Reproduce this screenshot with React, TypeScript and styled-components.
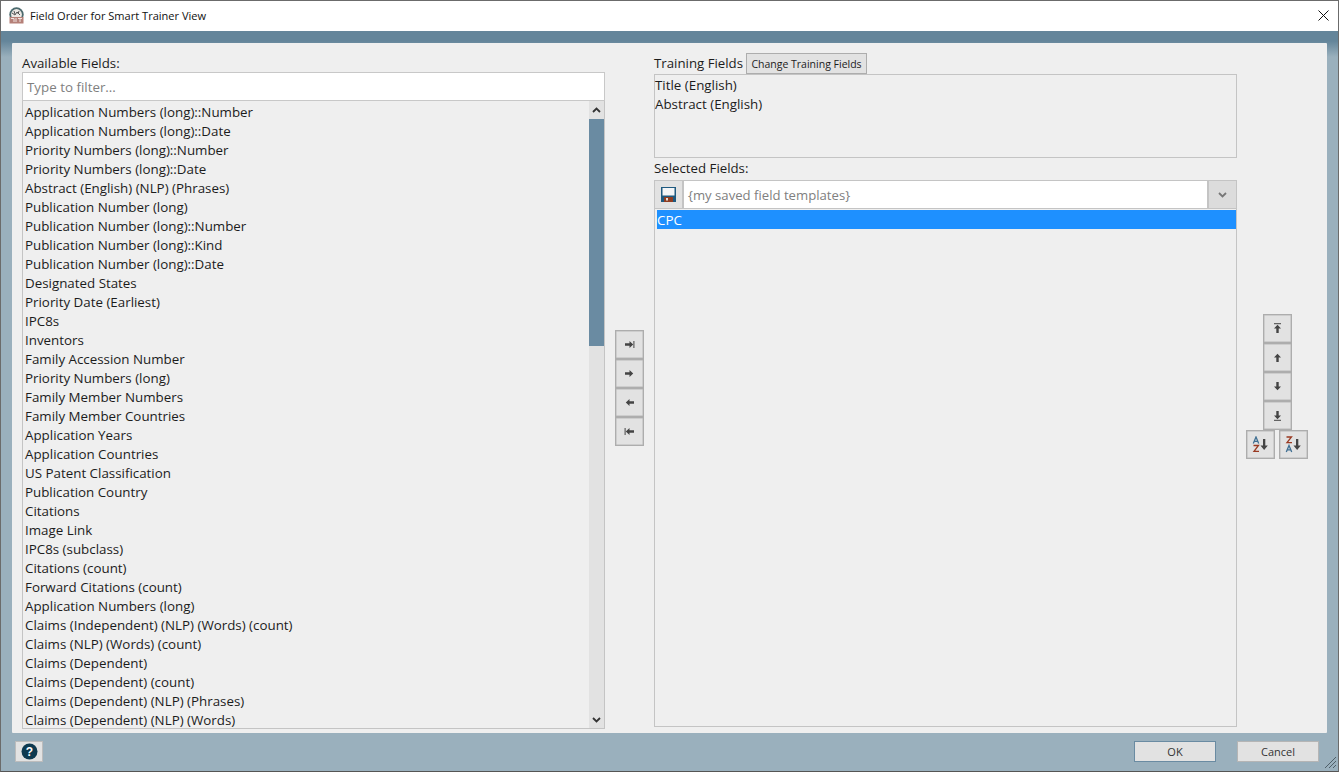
import React from "react";
import styled, { createGlobalStyle } from "styled-components";

const Global = createGlobalStyle`
  html, body { margin: 0; padding: 0; background: #9ab0bd; }
  * { box-sizing: border-box; }
  body { font-family: "Open Sans", "Liberation Sans", sans-serif; color: #1c1c1c; }
`;

const Win = styled.div`
  width: 1339px; height: 772px; display: flex; flex-direction: column; overflow: hidden;
  border: 1px solid #6b6b6b; border-bottom-color: #555; position: relative;
  background: #9ab0bd;
`;
const TitleBar = styled.div`
  height: 30px; flex: none; background: #fff; display: flex; align-items: center; padding: 0 0 2px 7px; gap: 4px;
  font-size: 11.05px; color: #111;
`;
const TitleText = styled.span`flex: 1; padding-left: 1px;`;
const CloseBox = styled.div`width: 30px; height: 28px; display: flex; align-items: center; justify-content: center;`;
const Body = styled.div`
  flex: 1; display: flex; flex-direction: column; padding: 12px 11px 0 11px;
  background: linear-gradient(#64859a 0, #64859a 10px, #9ab0bd 26px);
`;
const Panel = styled.div`
  height: 690px; flex: none; background: #efefef; padding: 10px 0 0 10px; display: flex; gap: 10px;
  border-radius: 1px;
`;
const Col = styled.div`width: 583px; flex: none; display: flex; flex-direction: column;`;
const Label = styled.div`font-size: 13.25px; height: 19px; line-height: 19px; white-space: nowrap;`;
const LeftLabel = styled(Label)`flex: none; line-height: 21px;`;
const TrainLabel = styled(Label)`width: 88px; flex: none;`;
const FilterInput = styled.div`
  height: 29px; flex: none; background: #fff; border: 1px solid #c8c8c8; padding-left: 4px;
  font-size: 13.35px; line-height: 29px; color: #7f7f7f;
`;
const ListBox = styled.div`height: 628px; flex: none; display: flex; border: 1px solid #c4c4c4; border-top: 0;`;
const ListBody = styled.div`flex: 1; padding: 2px 0 0 2px;`;
const Row = styled.div`height: 19px; line-height: 19px; font-size: 13.35px; white-space: nowrap;`;
const ScrollBar = styled.div`width: 15px; flex: none; background: #e2e2e2; display: flex; flex-direction: column;`;
const ScrollArrow = styled.div<{ $h: number }>`
  height: ${(p) => p.$h}px; flex: none; display: flex; align-items: center; justify-content: center; background: #e2e2e2;
`;
const ScrollThumb = styled.div`height: 227px; flex: none; background: #6a8ba2;`;
const ScrollTrack = styled.div`flex: 1;`;

const MidCol = styled.div`width: 29px; flex: none; padding-top: 277px; display: flex; flex-direction: column;`;
const IconBtn = styled.div`
  width: 29px; height: 29px; flex: none; background: #e2e2e2; border: 1px solid #adadad; display: flex; align-items: center; justify-content: center;
  box-shadow: inset 0 0 0 0.5px #b8b8b8;
`;
const TrainHead = styled.div`display: flex; height: 21px; flex: none; align-items: center; gap: 4px;`;
const ChangeBtn = styled.div`
  width: 121px; height: 21px; background: #e2e2e2; border: 1px solid #adadad; font-size: 10.5px; line-height: 20px; text-align: center; white-space: nowrap;
`;
const TrainBox = styled.div`height: 84px; flex: none; border: 1px solid #c4c4c4; padding: 1px 0 0 0;`;
const SelLabel = styled(Label)`margin-top: 1px; height: 21px; line-height: 19px;`;
const Combo = styled.div`height: 29px; flex: none; display: flex; border: 1px solid #c4c4c4;`;
const SaveBtn = styled.div`width: 29px; flex: none; background: #e2e2e2; border-right: 2px solid #c4c4c4; display: flex; align-items: center; justify-content: center;`;
const ComboText = styled.div`flex: 1; background: #fff; padding-left: 4px; font-size: 13.15px; line-height: 29px; color: #808080;`;
const ComboArrow = styled.div`width: 29px; flex: none; background: #dcdcdc; border-left: 2px solid #c4c4c4; display: flex; align-items: center; justify-content: center;`;
const SelList = styled.div`height: 518px; flex: none; border: 1px solid #c4c4c4; border-top: 0; padding: 1px 0 0 2px;`;
const SelRow = styled.div`height: 19px; line-height: 21px; font-size: 13.35px; background: #1e90ff; color: #fff;`;

const Rail = styled.div`width: 62px; margin-left: -1px; flex: none; padding-top: 261px; display: flex; flex-direction: column; align-items: center;`;
const SortRow = styled.div`display: flex; gap: 4px;`;

const Footer = styled.div`flex: 1; display: flex; align-items: flex-start; padding: 8px 8px 0 3px; position: relative;`;
const HelpBtn = styled.div`width: 28px; height: 21px; background: #e2e2e2; border: 1px solid #bcbcbc; display: flex; align-items: center; justify-content: center;`;
const Spacer = styled.div`flex: 1;`;
const DialogBtn = styled.div<{ $primary?: boolean }>`
  width: 82px; height: 21px; background: #e2e2e2; font-size: 11px; line-height: 19px; text-align: center;
  border: 1px solid ${(p) => (p.$primary ? "#6a8ba2" : "#b5b5b5")}; color: #333;
  margin-left: ${(p) => (p.$primary ? "0" : "21px")};
`;
const Grip = styled.svg`position: absolute; right: -10px; bottom: 2px;`;

const fields = [
  "Application Numbers (long)::Number","Application Numbers (long)::Date","Priority Numbers (long)::Number","Priority Numbers (long)::Date",
  "Abstract (English) (NLP) (Phrases)","Publication Number (long)","Publication Number (long)::Number","Publication Number (long)::Kind",
  "Publication Number (long)::Date","Designated States","Priority Date (Earliest)","IPC8s","Inventors","Family Accession Number",
  "Priority Numbers (long)","Family Member Numbers","Family Member Countries","Application Years","Application Countries",
  "US Patent Classification","Publication Country","Citations","Image Link","IPC8s (subclass)","Citations (count)","Forward Citations (count)",
  "Application Numbers (long)","Claims (Independent) (NLP) (Words) (count)","Claims (NLP) (Words) (count)","Claims (Dependent)",
  "Claims (Dependent) (count)","Claims (Dependent) (NLP) (Phrases)","Claims (Dependent) (NLP) (Words)",
];

const G = "#444";
const Glyph = ({ d }: { d: React.ReactNode }) => (
  <svg width="11" height="11" viewBox="0 0 11 11">{d}</svg>
);
const right = <path d="M1 4.300h4.500V2l3.700 3.500L5.500 9V6.700H1z" fill={G} />;
const left = <path d="M10 4.300H5.500V2L1.800 5.500 5.500 9V6.700H10z" fill={G} />;
const up = <path d="M4.300 10V5.500H2L5.500 1.800 9 5.500H6.700V10z" fill={G} />;
const down = <path d="M4.300 1v4.500H2L5.500 9.200 9 5.500H6.700V1z" fill={G} />;

const Chevron = ({ up: isUp, color = "#333" }: { up?: boolean; color?: string }) => (
  <svg width="9" height="6" viewBox="0 0 9 6">
    <path d={isUp ? "M1 5l3.500-3.500L8 5" : "M1 1l3.500 3.500L8 1"} fill="none" stroke={color} strokeWidth="1.800" />
  </svg>
);

const SortIcon = ({ rev }: { rev?: boolean }) => (
  <svg width="19" height="17" viewBox="0 0 19 17">
    <g fill="none" strokeWidth="1.300">
      <g stroke={rev ? "#9a3a22" : "#3f6f92"}>
        {rev ? <path d="M2.500 1h5L3 6.600h5" /> : <path d="M2.300 7.500L5 1l2.700 6.500M3.300 5.300h3.400" />}
      </g>
      <g stroke={rev ? "#3f6f92" : "#9a3a22"}>
        {rev ? <path d="M2.300 16L5 9.500l2.700 6.500M3.300 13.800h3.400" /> : <path d="M2.500 9.500h5L3 15.400h5" />}
      </g>
    </g>
    <path d="M12 3h2.300v6.500h2.500L13.150 14 9.500 9.500H12z" fill={G} />
  </svg>
);

const Logo = () => (
  <svg width="17" height="17" viewBox="0 0 17 17">
    <circle cx="8.500" cy="7.500" r="7.200" fill="#4c6a6e" />
    <circle cx="8.500" cy="7.500" r="5.400" fill="#ece8e4" />
    <path d="M4 6l3 2 2-3 3 3M6 4l1 3M11 4l-1 3" stroke="#555" strokeWidth="1" fill="none" />
    <rect x="1.500" y="10" width="14" height="6.500" fill="#b58078" />
    <path d="M3 11.500h3v3.500M8 11v4M10 11.500h4M12 11.500v3.500" stroke="#efe3e0" strokeWidth="1" fill="none" />
  </svg>
);

export default function App() {
  return (
    <Win>
      <Global />
      <TitleBar>
        <Logo />
        <TitleText>Field Order for Smart Trainer View</TitleText>
        <CloseBox>
          <svg width="11" height="11" viewBox="0 0 11 11"><path d="M.5.5l10 10M10.500.5l-10 10" stroke="#111" strokeWidth="1" /></svg>
        </CloseBox>
      </TitleBar>
      <Body>
        <Panel>
          <Col>
            <LeftLabel>Available Fields:</LeftLabel>
            <FilterInput>Type to filter...</FilterInput>
            <ListBox>
              <ListBody>{fields.map((f, i) => <Row key={i}>{f}</Row>)}</ListBody>
              <ScrollBar>
                <ScrollArrow $h={18}><Chevron up /></ScrollArrow>
                <ScrollThumb />
                <ScrollTrack />
                <ScrollArrow $h={17}><Chevron /></ScrollArrow>
              </ScrollBar>
            </ListBox>
          </Col>
          <MidCol>
            <IconBtn><Glyph d={<>{right}<rect x="9.400" y="2" width="1" height="7" fill={G} /></>} /></IconBtn>
            <IconBtn><Glyph d={right} /></IconBtn>
            <IconBtn><Glyph d={left} /></IconBtn>
            <IconBtn><Glyph d={<>{left}<rect x=".6" y="2" width="1" height="7" fill={G} /></>} /></IconBtn>
          </MidCol>
          <Col>
            <TrainHead>
              <TrainLabel>Training Fields</TrainLabel>
              <ChangeBtn>Change Training Fields</ChangeBtn>
            </TrainHead>
            <TrainBox>
              <Row>Title (English)</Row>
              <Row>Abstract (English)</Row>
            </TrainBox>
            <SelLabel>Selected Fields:</SelLabel>
            <Combo>
              <SaveBtn>
                <svg width="15" height="15" viewBox="0 0 15 15">
                  <path d="M0 0h15v15H0z" fill="#1f5a80" />
                  <rect x="1.500" y="1" width="12" height="7.500" fill="#f4f6f8" />
                  <rect x="3" y="10" width="9" height="5" fill="#8f3d22" />
                  <rect x="5" y="11" width="2" height="2.500" fill="#e8e0d8" />
                </svg>
              </SaveBtn>
              <ComboText>{"{my saved field templates}"}</ComboText>
              <ComboArrow><Chevron color="#777" /></ComboArrow>
            </Combo>
            <SelList><SelRow>CPC</SelRow></SelList>
          </Col>
          <Rail>
            <IconBtn><Glyph d={<>{up}<rect x="2" y=".2" width="7" height="1" fill={G} /></>} /></IconBtn>
            <IconBtn><Glyph d={up} /></IconBtn>
            <IconBtn><Glyph d={down} /></IconBtn>
            <IconBtn><Glyph d={<>{down}<rect x="2" y="9.800" width="7" height="1" fill={G} /></>} /></IconBtn>
            <SortRow>
              <IconBtn><SortIcon /></IconBtn>
              <IconBtn><SortIcon rev /></IconBtn>
            </SortRow>
          </Rail>
        </Panel>
        <Footer>
          <HelpBtn>
            <svg width="17" height="17" viewBox="0 0 17 17">
              <circle cx="8.500" cy="8.500" r="8" fill="#0e3a50" />
              <text x="8.500" y="13" textAnchor="middle" fontSize="12" fontWeight="700" fill="#fff" fontFamily="Liberation Sans">?</text>
            </svg>
          </HelpBtn>
          <Spacer />
          <DialogBtn $primary>OK</DialogBtn>
          <DialogBtn>Cancel</DialogBtn>
          <Grip width="13" height="13" viewBox="0 0 13 13">
            <path d="M1 12L12 1M5 12l7-7M9 12l3-3" stroke="#4f5f68" strokeWidth="1" />
          </Grip>
        </Footer>
      </Body>
    </Win>
  );
}
